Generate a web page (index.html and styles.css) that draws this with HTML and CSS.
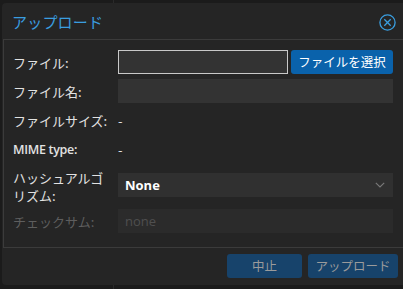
FILE: index.html
```html
<!DOCTYPE html>
<html lang="ja">
<head>
<meta charset="utf-8">
<link rel="stylesheet" href="styles.css">
</head>
<body>
<div class="backdrop-line"></div>
<div class="window">
  <div class="header">
    <div class="title">アップロード</div>
    <svg class="close" width="17" height="17" viewBox="0 0 17 17">
      <circle cx="8.5" cy="8.5" r="7.6" fill="none" stroke="#3a9ee0" stroke-width="1.3"/>
      <path d="M5.3 5.3 L11.7 11.7 M11.7 5.3 L5.3 11.7" stroke="#3a9ee0" stroke-width="1.3" fill="none"/>
    </svg>
  </div>
  <div class="panel">
    <div class="row">
      <div class="label">ファイル:</div>
      <div class="field file-field">
        <div class="input focused"></div>
        <div class="btn-primary">ファイルを選択</div>
      </div>
    </div>
    <div class="row">
      <div class="label">ファイル名:</div>
      <div class="field"><div class="input"></div></div>
    </div>
    <div class="row">
      <div class="label">ファイルサイズ:</div>
      <div class="field value">-</div>
    </div>
    <div class="row">
      <div class="label latin">MIME type:</div>
      <div class="field value">-</div>
    </div>
    <div class="row row-hash">
      <div class="label two-line"><div>ハッシュアルゴ</div><div>リズム:</div></div>
      <div class="field">
        <div class="combo">
          <span class="combo-text">None</span>
          <svg class="chevron" width="10" height="6" viewBox="0 0 10 6"><path d="M0.8 0.8 L5 5 L9.2 0.8" fill="none" stroke="#7a7a7a" stroke-width="1.1"/></svg>
        </div>
      </div>
    </div>
    <div class="row">
      <div class="label disabled">チェックサム:</div>
      <div class="field"><div class="input disabled-input">none</div></div>
    </div>
  </div>
  <div class="footer">
    <div class="btn-footer btn-cancel">中止</div>
    <div class="btn-footer btn-upload">アップロード</div>
  </div>
</div>
</body>
</html>
```

FILE: styles.css
```css
html, body {
  margin: 0;
  padding: 0;
}
body {
  width: 403px;
  height: 289px;
  overflow: hidden;
  background: #1b1b1b;
  font-family: "Noto Sans CJK JP", "Noto Sans", sans-serif;
  position: relative;
  padding: 3px 0 0 2px;
  box-sizing: border-box;
}
.backdrop-line {
  position: absolute;
  left: 113px;
  top: 0;
  width: 1px;
  height: 289px;
  background: #2a2a2a;
}
.window {
  position: relative;
  width: 403px;
  height: 282px;
  background: #252525;
  border-radius: 4px 0 0 4px;
  display: flex;
  flex-direction: column;
}
.header {
  height: 36px;
  display: flex;
  align-items: center;
  justify-content: space-between;
  padding: 0 9px 0 10px;
  box-sizing: border-box;
}
.title {
  color: #3a9ee0;
  font-size: 15px;
  line-height: 18px;
  margin-top: 1px;
  letter-spacing: 0.2px;
}
.close {
  display: block;
  margin-top: 2px;
}
.panel {
  margin-left: 1px;
  border: 1px solid #3b3b3b;
  border-right: none;
  padding: 10px 0 14px 9px;
  display: flex;
  flex-direction: column;
  gap: 5px;
}
.row {
  display: grid;
  grid-template-columns: 105px 275px;
  min-height: 24px;
  align-items: center;
}
.label {
  color: #e2e2e2;
  font-size: 13px;
  line-height: 17px;
}
.label.latin {
  font-family: "Open Sans", "Noto Sans", sans-serif;
  font-weight: 600;
  font-size: 12.5px;
  letter-spacing: -0.3px;
}
.label.disabled {
  color: #5e5e5e;
}
.value {
  color: #e2e2e2;
  font-size: 13px;
}
.file-field {
  display: flex;
  gap: 3px;
}
.input {
  height: 24px;
  flex: 1;
  background: #333333;
  box-sizing: border-box;
}
.input.focused {
  border: 1px solid #c9c9c9;
  flex: 0 0 170px;
}
.btn-primary {
  flex: 1;
  height: 24px;
  background: #0a62ab;
  border-radius: 3px;
  color: #ffffff;
  font-size: 12.5px;
  line-height: 24px;
  text-align: center;
}
.row-hash {
  margin-top: 3px;
  margin-bottom: -1px;
  align-items: start;
}
.two-line {
  display: flex;
  flex-direction: column;
}
.two-line div {
  height: 18px;
  line-height: 18px;
}
.row-hash .field {
  padding-top: 4px;
}
.combo {
  height: 24px;
  background: #303030;
  display: flex;
  align-items: center;
  justify-content: space-between;
  padding: 0 8px 0 7px;
}
.combo-text {
  color: #ffffff;
  font-family: "Open Sans", "Noto Sans", sans-serif;
  font-weight: 700;
  font-size: 13px;
}
.chevron {
  display: block;
}
.disabled-input {
  background: #2b2b2b;
  color: #4f4f4f;
  font-family: "Open Sans", "Noto Sans", sans-serif;
  font-size: 13px;
  line-height: 24px;
  padding-left: 7px;
}
.footer {
  flex: 1;
  display: flex;
  justify-content: flex-end;
  align-items: flex-start;
  gap: 6px;
  padding: 6px 7px 0 0;
}
.btn-footer {
  height: 24px;
  background: #17436b;
  border-radius: 3px;
  color: #9b9b9b;
  font-size: 12.5px;
  line-height: 24px;
  text-align: center;
}
.btn-cancel {
  width: 75px;
}
.btn-upload {
  width: 90px;
}
```
